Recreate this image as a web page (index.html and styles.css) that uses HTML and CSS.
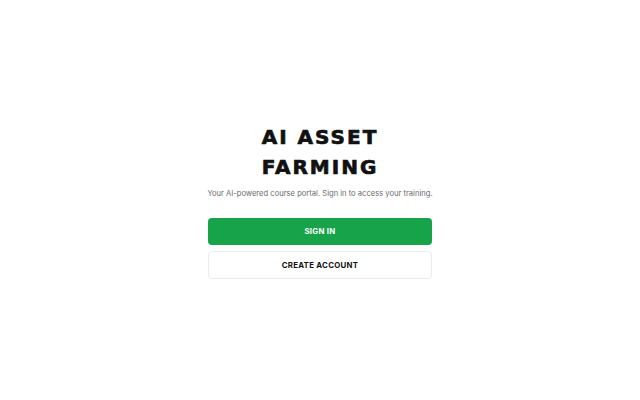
FILE: index.html
```html
<!DOCTYPE html>
<html lang="en">
<head>
<meta charset="utf-8">
<title>AI Asset Farming</title>
<link rel="stylesheet" href="styles.css">
</head>
<body>
<main class="page">
  <section class="card">
    <h1 class="title">AI ASSET<br>FARMING</h1>
    <p class="subtitle">Your AI-powered course portal. Sign in to access your training.</p>
    <div class="actions">
      <button class="btn btn-primary">SIGN IN</button>
      <button class="btn btn-secondary">CREATE ACCOUNT</button>
    </div>
  </section>
</main>
</body>
</html>
```

FILE: styles.css
```css
html, body {
  margin: 0;
  padding: 0;
  background: #ffffff;
}
body {
  font-family: Inter, "Noto Sans", sans-serif;
}
.page {
  height: 400px;
  display: flex;
  align-items: center;
  justify-content: center;
}
.card {
  width: 224px;
  display: flex;
  flex-direction: column;
  align-items: center;
}
.title {
  margin: 0;
  font-family: "DejaVu Sans", sans-serif;
  font-weight: 700;
  font-size: 20px;
  line-height: 30px;
  letter-spacing: 2px;
  -webkit-text-stroke: 0.7px #111111;
  text-align: center;
  color: #111111;
}
.subtitle {
  margin: 6px 0 0;
  font-size: 7.6px;
  line-height: 12px;
  color: #6b6b6b;
  white-space: nowrap;
  text-align: center;
}
.actions {
  margin-top: 18px;
  width: 100%;
  display: flex;
  flex-direction: column;
  gap: 6px;
}
.btn {
  width: 100%;
  height: 27px;
  border-radius: 4px;
  font-family: Inter, sans-serif;
  font-weight: 700;
  font-size: 7.8px;
  letter-spacing: 0.3px;
  cursor: pointer;
  padding: 0;
}
.btn-primary {
  background: #16a34a;
  color: #ffffff;
  border: none;
}
.btn-secondary {
  height: 28px;
  background: #ffffff;
  color: #111111;
  border: 1px solid #efe9e9;
}
```
